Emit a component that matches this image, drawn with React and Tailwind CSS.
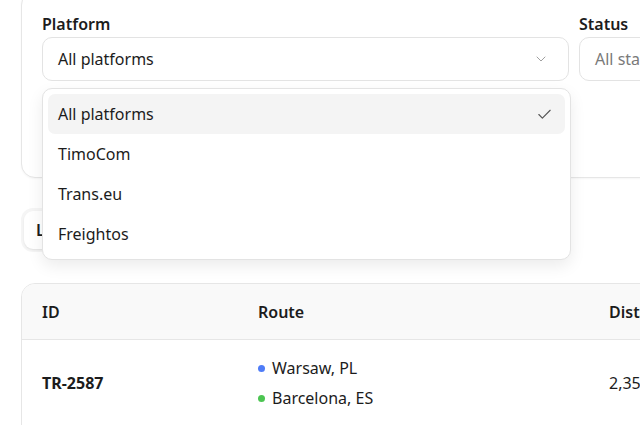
import React from "react";
import { ChevronDown, Check } from "lucide-react";

const platforms = ["All platforms", "TimoCom", "Trans.eu", "Freightos"];

export default function App() {
  return (
    <div
      className="relative h-[425px] w-[640px] overflow-hidden bg-white text-[#1c1c1c]"
      style={{ fontFamily: '"Noto Sans", "Open Sans", sans-serif' }}
    >
      <div className="w-[1100px] pl-[21px]">
        {/* filters */}
        <div className="relative -mt-[9px] h-[187px] rounded-[14px] border border-[#e6e6e6] bg-white px-5 pt-5 shadow-[0_1px_2px_rgba(0,0,0,0.04)]">
          <div className="grid grid-cols-[527px_300px] gap-[10px]">
            <div>
              <label className="block text-[16px] font-semibold leading-6">Platform</label>
              <div className="mt-[1px] flex h-[44px] items-center justify-between rounded-[10px] border border-[#e3e3e3] bg-white pl-[15px] pr-[19px] text-[16px]">
                <span>All platforms</span>
                <ChevronDown size={16} strokeWidth={1.5} className="text-[#a0a0a0]" />
              </div>
            </div>
            <div>
              <label className="block text-[16px] font-semibold leading-6">Status</label>
              <div className="mt-[1px] flex h-[44px] items-center rounded-[10px] border border-[#e3e3e3] bg-white pl-[15px] text-[16px] text-[#7a7a7a]">
                All statuses
              </div>
            </div>
          </div>

          {/* open platform menu */}
          <div className="absolute left-5 top-[96px] z-10 w-[529px] rounded-[10px] border border-[#e3e3e3] bg-white p-[5px] shadow-[0_6px_16px_rgba(0,0,0,0.08)]">
            {platforms.map((p, i) => (
              <div
                key={p}
                className={
                  "flex h-[40px] items-center justify-between rounded-[7px] pl-[10px] pr-[12px] text-[16px] " +
                  (i === 0 ? "bg-[#f4f4f4]" : "")
                }
              >
                <span>{p}</span>
                {i === 0 && <Check size={17} strokeWidth={1.6} className="text-[#555]" />}
              </div>
            ))}
          </div>
        </div>

        {/* view toggle */}
        <div className="mt-[30px] inline-flex rounded-[12px] bg-[#f5f5f5] p-[3px]">
          <button className="rounded-[9px] bg-white px-3 py-[7px] text-[16px] font-semibold shadow-[0_1px_2px_rgba(0,0,0,0.08)]">
            List
          </button>
        </div>

        {/* table */}
        <div className="mt-[31px] overflow-hidden rounded-[14px] border border-[#e6e6e6] bg-white">
          <div className="grid h-[56px] grid-cols-[216px_351px_200px] items-center border-b border-[#e6e6e6] bg-[#f9f9f9] px-5 text-[16px] font-semibold">
            <div>ID</div>
            <div>Route</div>
            <div>Distance</div>
          </div>
          <div className="grid grid-cols-[216px_351px_200px] items-center border-b border-[#eeeeee] px-5 pb-[18px] pt-[16px] text-[16px]">
            <div className="font-bold">TR-2587</div>
            <div className="flex flex-col gap-[6px]">
              <div className="flex items-center gap-[7px] leading-6">
                <span className="h-[7px] w-[7px] rounded-full bg-[#4f7cf7]" />
                Warsaw, PL
              </div>
              <div className="flex items-center gap-[7px] leading-6">
                <span className="h-[7px] w-[7px] rounded-full bg-[#4cc552]" />
                Barcelona, ES
              </div>
            </div>
            <div>2,350 km</div>
          </div>
          <div className="h-[60px]" />
        </div>
      </div>
    </div>
  );
}
